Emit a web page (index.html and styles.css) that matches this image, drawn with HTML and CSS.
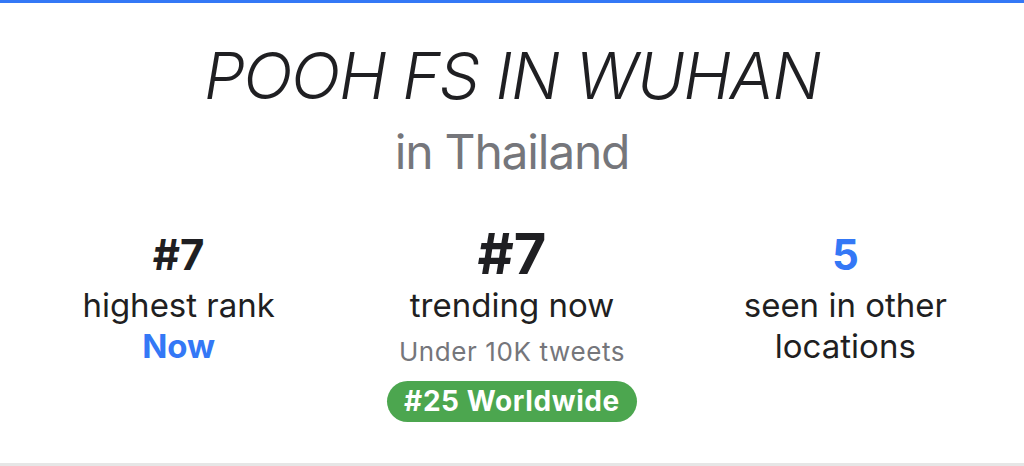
FILE: index.html
```html
<!DOCTYPE html>
<html lang="en">
<head>
<meta charset="utf-8">
<title>POOH FS IN WUHAN in Thailand</title>
<link rel="stylesheet" href="styles.css">
</head>
<body>
<div class="top-bar"></div>
<main class="card">
  <header class="heading">
    <h1 class="title">POOH FS IN WUHAN</h1>
    <p class="subtitle">in Thailand</p>
  </header>
  <section class="stats">
    <div class="stat">
      <div class="num num-sm">#7</div>
      <div class="label">highest rank</div>
      <div class="label accent">Now</div>
    </div>
    <div class="stat">
      <div class="num num-lg">#7</div>
      <div class="label">trending now</div>
      <div class="meta">Under 10K tweets</div>
      <div class="badge">#25 Worldwide</div>
    </div>
    <div class="stat">
      <div class="num num-sm blue">5</div>
      <div class="label">seen in other<br>locations</div>
    </div>
  </section>
</main>
<div class="bottom-rule"></div>
</body>
</html>
```
FILE: styles.css
```css
* { box-sizing: border-box; }
html, body { margin: 0; padding: 0; }
body {
  width: 1024px;
  height: 466px;
  background: #ffffff;
  font-family: Inter, "Noto Sans", "Liberation Sans", sans-serif;
  color: #1f1f22;
  display: flex;
  flex-direction: column;
  overflow: hidden;
}
.top-bar {
  height: 3px;
  background: #3478f6;
  flex: none;
}
.card {
  flex: 1;
  display: flex;
  flex-direction: column;
  padding: 33px 12px 0;
}
.heading {
  display: flex;
  flex-direction: column;
  align-items: center;
}
.title {
  margin: 0;
  font-size: 65px;
  line-height: 80px;
  font-weight: 300;
  font-style: italic;
  color: #1f1f22;
  letter-spacing: -1.5px;
}
.subtitle {
  margin: 6px 0 0;
  font-size: 48px;
  line-height: 60px;
  font-weight: 400;
  color: #75767b;
  letter-spacing: -1.2px;
}
.stats {
  display: grid;
  grid-template-columns: repeat(3, 1fr);
  margin-top: 42px;
}
.stat {
  display: flex;
  flex-direction: column;
  align-items: center;
  text-align: center;
}
.num {
  height: 61px;
  line-height: 61px;
  font-weight: 700;
  color: #1f1f22;
}
.num-sm { font-size: 42px; }
.num-lg { font-size: 56px; }
.blue, .accent { color: #3478f6; }
.label {
  font-size: 33px;
  line-height: 41px;
  font-weight: 400;
}
.accent { font-weight: 700; }
.meta {
  font-size: 26px;
  line-height: 52px;
  color: #75767b;
  letter-spacing: 0.6px;
}
.badge {
  margin-top: 3px;
  height: 41px;
  line-height: 41px;
  padding: 0 17px;
  border-radius: 21px;
  background: #4ca64f;
  color: #ffffff;
  font-size: 28px;
  font-weight: 700;
  letter-spacing: 0.6px;
}
.bottom-rule {
  height: 3px;
  background: #e6e6e6;
  flex: none;
}
```
